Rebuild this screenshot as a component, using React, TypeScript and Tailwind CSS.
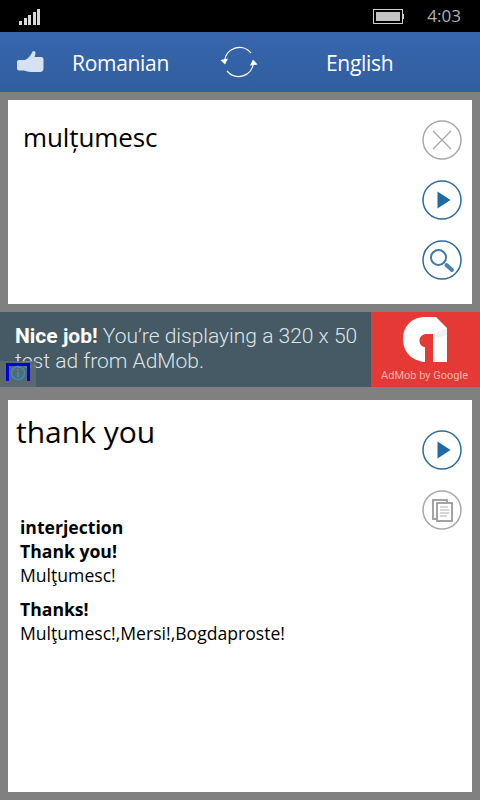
const SEGOE = 'font-["Open_Sans","Noto_Sans",sans-serif]';

function CircleButton({ color, children }: { color: string; children: React.ReactNode }) {
  return (
    <svg width="40" height="40" viewBox="0 0 40 40" fill="none" className="block">
      <circle cx="20" cy="20" r="19" stroke={color} strokeWidth="1.5" />
      {children}
    </svg>
  );
}

function PlayIcon() {
  return (
    <CircleButton color="#2f6b9c">
      <path d="M15.5 11.5 L28.500 20 L15.5 28.5 Z" fill="#1f6aa5" />
    </CircleButton>
  );
}

function Thumb() {
  return (
    <svg width="28" height="28" viewBox="0 0 28 28" className="block">
      <path
        d="M1 13.5 Q1 12 3 12 L9 12 C12 10.5 14.5 8 16 4.5 C16.5 3 18 2.500 19 3.500 C19.800 4.500 19.500 6.500 18.500 9 L25 9 Q27.500 9 27.500 11.500 L27.500 20 Q27.500 24 24 24 L15 24 C12 24 10.500 23 8 22.500 L3.500 22.500 Q1 22.500 1 20 Z"
        fill="#d6e1f2"
      />
    </svg>
  );
}

function SwapIcon() {
  return (
    <svg width="38" height="32" viewBox="0 0 38 32" fill="none" className="block">
      <path d="M4.500 15 A15 15 0 0 1 31 7" stroke="white" strokeWidth="1.300" />
      <path d="M33.500 17 A15 15 0 0 1 7 25" stroke="white" strokeWidth="1.300" />
      <path d="M0.500 14 L8 12.500 L5 18.500 Z" fill="white" />
      <path d="M37.500 18.500 L30 19.500 L33 13.500 Z" fill="white" />
    </svg>
  );
}

function SignalBars() {
  return (
    <div className="flex items-end gap-[1.500px] h-[17px]">
      <div className="w-[3px] h-[4px] bg-[#d8d8d8]" />
      <div className="w-[3px] h-[7px] bg-[#d8d8d8]" />
      <div className="w-[3px] h-[10px] bg-[#d8d8d8]" />
      <div className="w-[3px] h-[13px] bg-[#d8d8d8]" />
      <div className="w-[3px] h-[16px] bg-[#d8d8d8]" />
    </div>
  );
}

function Battery() {
  return (
    <div className="flex items-center">
      <div className="w-[30px] h-[15px] border border-[#cfcfcf] p-[2px]">
        <div className="w-full h-full bg-[#c4c4c4]" />
      </div>
      <div className="w-[1px] h-[5px] bg-[#cfcfcf]" />
    </div>
  );
}

function AdMobLogo() {
  return (
    <svg width="44" height="45" viewBox="0 0 44 45" className="block">
      <path
        d="M22 0 L33 0 L44 11 L44 45 L30 45 L30 17 L24 17 C19.500 17 16.500 19.500 16.500 23.500 C16.500 27.500 19 30 22 30 L22 45 C9 44 0 35 0 22 C0 9 9 0 22 0 Z"
        fill="white"
      />
      <path d="M30 17 L44 11 L44 18 L30 22 Z" fill="#efefef" />
    </svg>
  );
}

export default function App() {
  return (
    <div className={`w-[480px] h-[800px] flex flex-col bg-[#808080] overflow-hidden ${SEGOE}`}>
      {/* status bar */}
      <div className="h-[32px] bg-black flex items-center pl-[19px] pr-[19px] shrink-0">
        <SignalBars />
        <div className="ml-auto">
          <Battery />
        </div>
        <span className="ml-[23px] -mt-[1px] text-[17px] text-[#b0b0b0] leading-none">4:03</span>
      </div>

      {/* language bar */}
      <div className="h-[60px] bg-gradient-to-b from-[#3766ae] to-[#315e9f] flex items-center shrink-0 relative text-white text-[21px] tracking-[-0.3px]">
        <div className="ml-[16px] w-[28px]">
          <Thumb />
        </div>
        <span className="ml-[28px] w-[148px] pt-[3px]">Romanian</span>
        <SwapIcon />
        <span className="ml-[68px] pt-[3px]">English</span>
      </div>

      {/* source */}
      <div className="mt-[8px] mx-[8px] h-[204px] bg-white flex justify-between shrink-0">
        <p className="pl-[15px] pt-[18px] text-[26px] leading-[38px] tracking-[-0.1px] text-black">mulțumesc</p>
        <div className="flex flex-col gap-[20px] pt-[20px] pr-[10px]">
          <CircleButton color="#a8a8a8">
            <path d="M11 11 L29 29 M29 11 L11 29" stroke="#a8a8a8" strokeWidth="1.300" />
          </CircleButton>
          <PlayIcon />
          <CircleButton color="#2f6b9c">
            <circle cx="16.500" cy="17.500" r="7.500" stroke="#3f7aa8" strokeWidth="2" />
            <path d="M24.500 25 L30 30" stroke="#4a82ac" strokeWidth="4" strokeLinecap="round" />
          </CircleButton>
        </div>
      </div>

      {/* ad banner */}
      <div className='mt-[8px] h-[75px] bg-[#455a64] flex shrink-0 relative font-["Roboto",sans-serif]'>
        <p className="w-[371px] pl-[15px] pt-[12px] text-[21px] leading-[25px] font-light text-[#dfe4e6] whitespace-nowrap">
          <b className="font-bold text-white">Nice job!</b> You’re displaying a 320 x 50
          <br />
          test ad from AdMob.
        </p>
        <div className="w-[109px] bg-[#e53935] flex flex-col items-center pt-[5px] pr-[2px]">
          <AdMobLogo />
          <span className="mt-[8px] text-[11px] leading-none text-[#f8b4b0] whitespace-nowrap">AdMob by Google</span>
        </div>
        <div className="absolute left-0 top-[49px] w-[36px] h-[26px] bg-[#5f6c73]/80 flex items-start justify-start">
          <div className="ml-[6px] mt-[2px] w-[24px] h-[18px] border-[3px] border-b-0 border-[#0000e0] flex justify-center">
            <svg width="16" height="16" viewBox="0 0 16 16" fill="none" className="block -mt-[1px] shrink-0">
              <circle cx="8" cy="8" r="6.500" stroke="#2f8fc0" strokeWidth="1.500" />
              <path d="M8 7 L8 12 M8 4 L8 5.500" stroke="#2f8fc0" strokeWidth="2" />
            </svg>
          </div>
        </div>
      </div>

      {/* result */}
      <div className="mt-[13px] mx-[8px] h-[392px] bg-white shrink-0 relative">
        <p className="pl-[8px] pt-[10px] text-[30px] leading-[44px] text-black">thank you</p>
        <div className="absolute right-[10px] top-[30px] flex flex-col gap-[20px]">
          <PlayIcon />
          <CircleButton color="#a8a8a8">
            <rect x="11" y="10" width="14" height="19" fill="white" stroke="#9a9a9a" strokeWidth="1.800" />
            <rect x="15" y="13" width="15" height="18" fill="white" stroke="#9a9a9a" strokeWidth="1.800" />
            <path d="M18 17 H26 M18 20 H27 M18 23 H27 M18 26 H25" stroke="#b0b0b0" strokeWidth="1.200" />
          </CircleButton>
        </div>
        <div className="pl-[12px] pt-[61px] text-[17.600px] leading-[24px] text-black">
          <div className="font-bold">interjection</div>
          <div className="font-bold">Thank you!</div>
          <div>Mulţumesc!</div>
          <div className="font-bold mt-[10px]">Thanks!</div>
          <div>Mulţumesc!,Mersi!,Bogdaproste!</div>
        </div>
      </div>
    </div>
  );
}
